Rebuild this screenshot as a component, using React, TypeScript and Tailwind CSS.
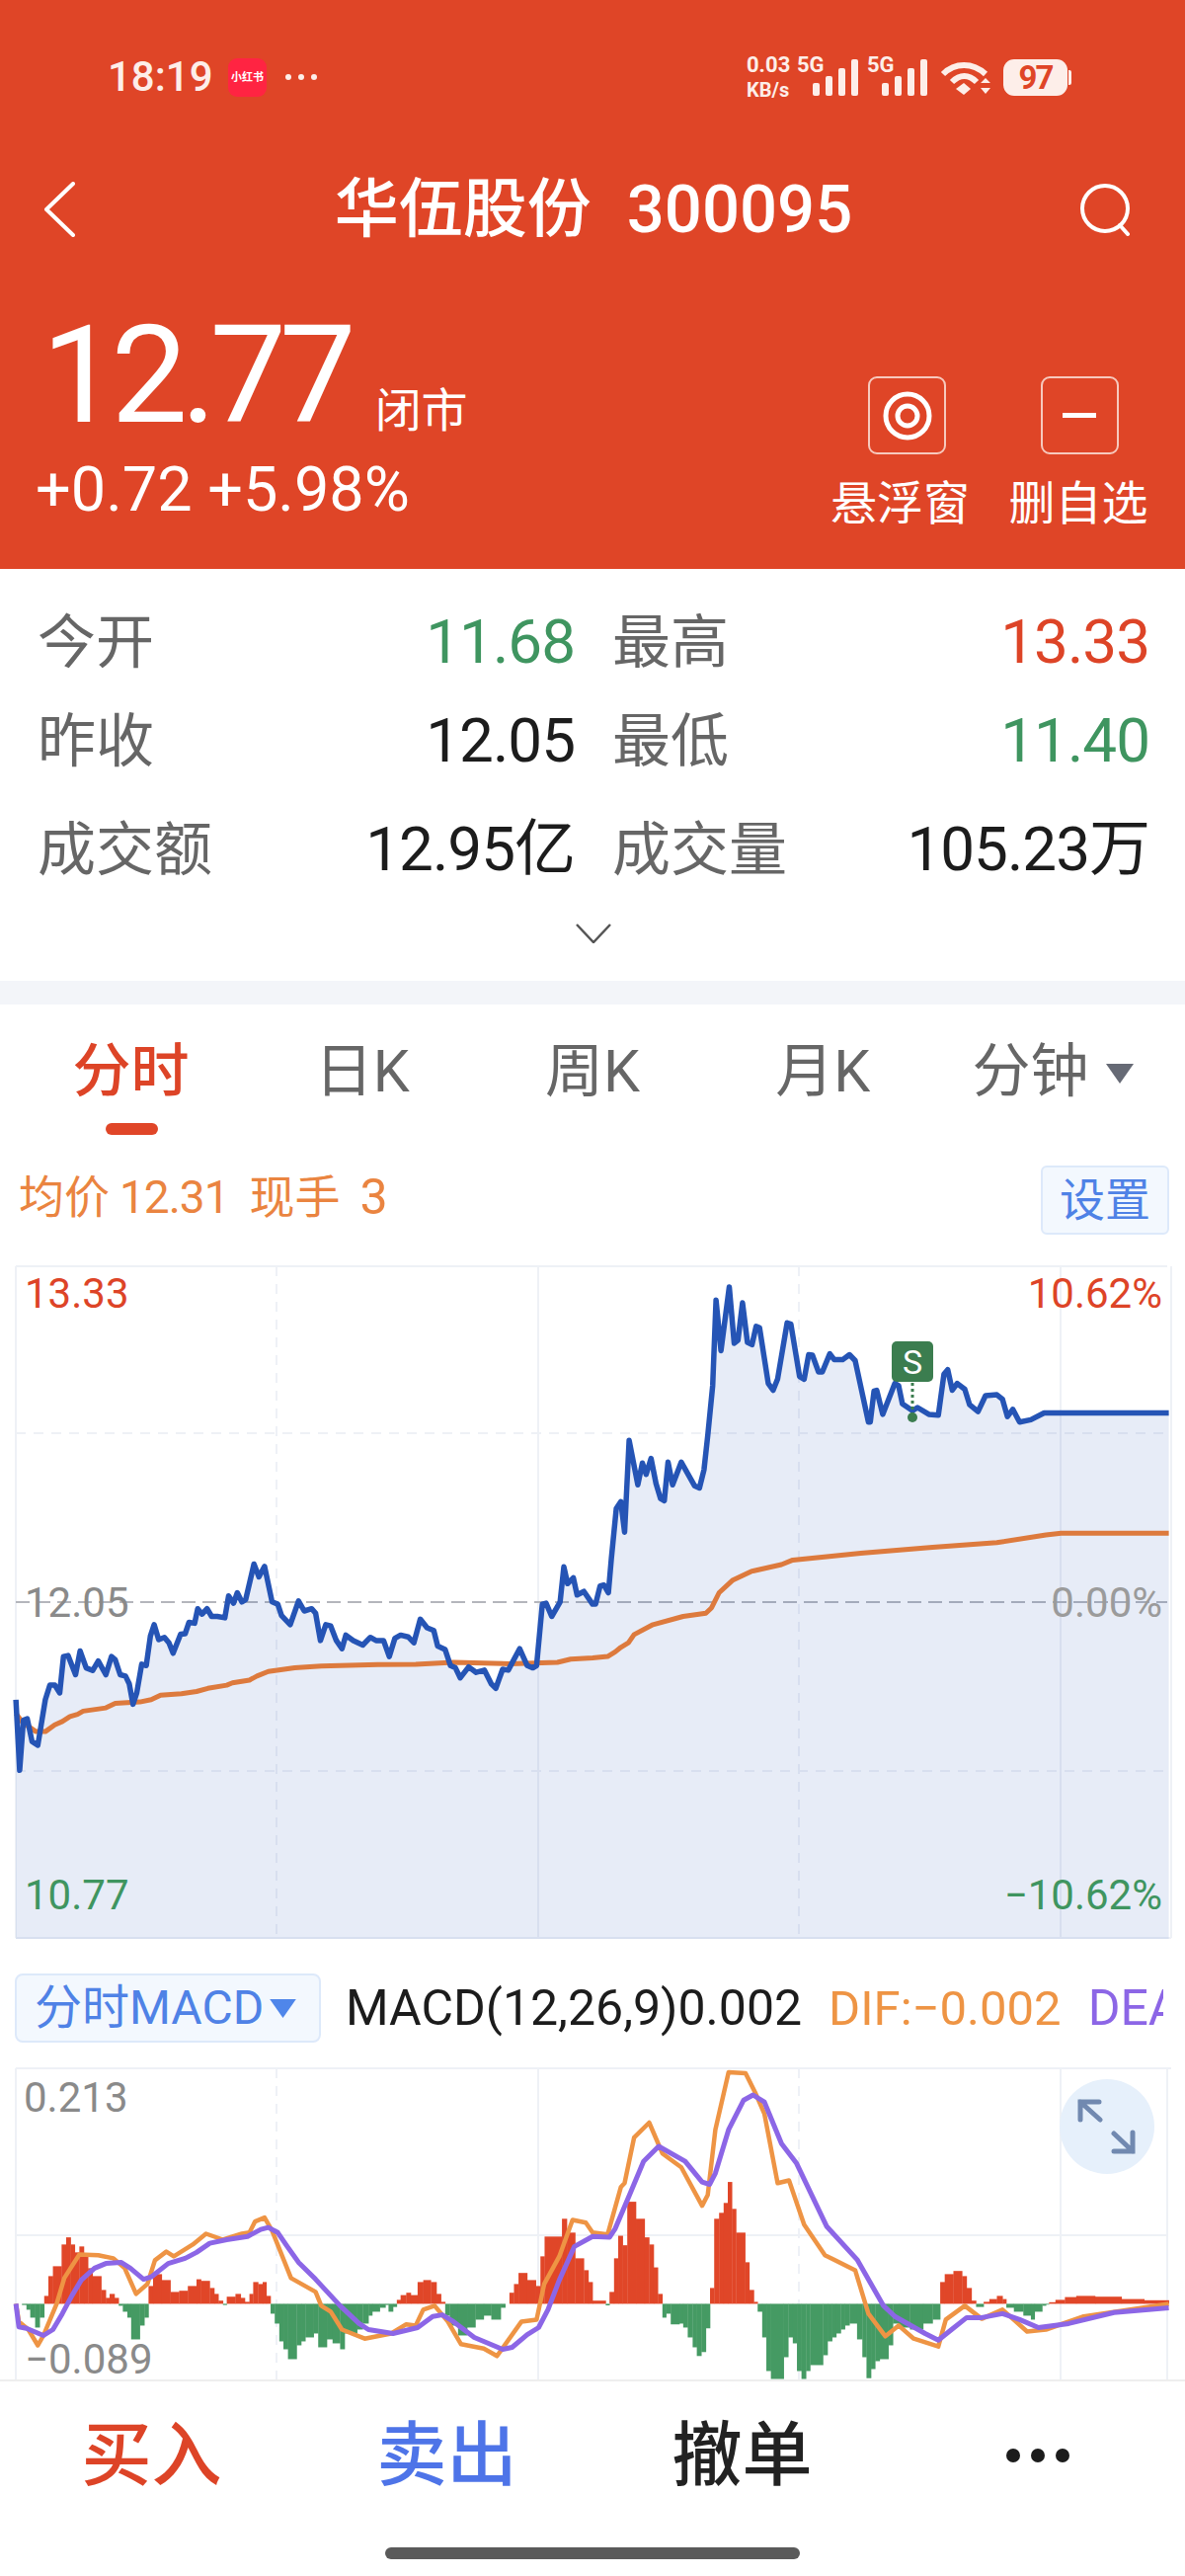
import React from "react";

type Pt = [number, number];

// Chart series are stored in the scaled coordinates of two half-width panes.
const leftX = (x: number) => x / 2.613;
const rightX = (x: number) => 600 + x / 2.613;
const priceY = (y: number) => 1260 + y / 2.17 - 1281;
const macdY = (y: number) => (1980 + y / 2.497) - 2093;

const join = (left: Pt[], right: Pt[], y: (v: number) => number) =>
  [...left.map(([a, b]) => [leftX(a), y(b)]), ...right.map(([a, b]) => [rightX(a), y(b)])]
    .map(([a, b]) => `${a.toFixed(1)},${b.toFixed(1)}`)
    .join(" ");

const priceL: Pt[] = [[42,1000],[52,1155],[62,1045],[72,1042],[85,1092],[100,1100],[120,1000],[132,968],[145,968],[158,985],[168,905],[180,903],[200,945],[212,893],[228,930],[245,936],[260,915],[280,945],[295,905],[305,912],[318,945],[332,948],[342,965],[352,1010],[362,985],[375,922],[387,925],[398,860],[408,835],[420,868],[435,863],[447,875],[458,898],[478,856],[490,855],[500,830],[515,832],[523,800],[535,812],[548,800],[560,817],[575,817],[595,820],[605,772],[618,788],[628,765],[640,785],[650,780],[672,702],[685,730],[700,707],[720,785],[735,790],[745,815],[768,835],[790,783],[805,805],[825,800],[835,810],[848,870],[862,835],[875,838],[890,870],[905,888],[915,858],[935,870],[960,880],[980,863],[995,870],[1015,870],[1030,905],[1045,865],[1060,858],[1080,862],[1095,875],[1112,823],[1130,842],[1148,848],[1158,882],[1178,890],[1192,925],[1205,930],[1218,952],[1240,928],[1260,940],[1282,935],[1300,965],[1312,975],[1330,933],[1345,935],[1375,888],[1395,925],[1410,930],[1420,925],[1435,790],[1445,788],[1460,817],[1482,785],[1492,708],[1502,745],[1517,732],[1527,770],[1545,762],[1568,790]];
const priceR: Pt[] = [[8,790],[20,750],[30,748],[42,765],[50,690],[63,580],[75,565],[85,632],[97,430],[120,528],[132,480],[142,505],[155,470],[168,525],[180,558],[190,563],[200,478],[212,528],[235,478],[270,530],[283,535],[295,495],[305,420],[318,310],[327,122],[340,233],[362,93],[375,217],[385,210],[397,128],[410,215],[422,220],[433,180],[442,183],[465,305],[478,320],[490,295],[515,172],[525,175],[548,290],[560,296],[572,242],[582,243],[598,280],[608,280],[628,240],[640,253],[662,253],[680,242],[695,255],[730,390],[735,390],[745,322],[752,320],[768,373],[800,305],[810,310],[820,350],[847,365],[860,358],[890,373],[915,375],[930,285],[940,275],[952,320],[965,305],[985,318],[998,352],[1020,367],[1040,332],[1070,330],[1085,340],[1098,378],[1112,362],[1130,390],[1160,385],[1195,370],[1525,370]];
const avgL: Pt[] = [[42,1030],[60,1050],[95,1070],[120,1070],[145,1055],[165,1048],[185,1037],[205,1032],[220,1025],[280,1018],[305,1008],[370,1005],[400,1000],[425,990],[480,987],[520,982],[550,975],[600,968],[615,963],[660,957],[680,948],[710,938],[780,930],[850,926],[1000,923],[1100,922],[1200,918],[1350,921],[1475,918],[1510,911],[1568,908]];
const avgR: Pt[] = [[40,905],[60,895],[75,885],[95,875],[110,857],[160,835],[240,817],[300,810],[315,798],[335,765],[370,738],[420,718],[500,703],[530,693],[710,678],[900,665],[1070,655],[1200,638],[1240,634],[1525,634]];

const deaL: Pt[] = [[42,880],[50,938],[70,942],[115,960],[140,945],[165,905],[190,860],[215,820],[250,790],[280,778],[320,775],[345,790],[380,818],[400,812],[445,778],[490,765],[520,750],[555,727],[600,718],[655,710],[690,692],[710,687],[735,700],[760,735],[790,775],[835,818],[900,885],[950,930],[975,945],[1040,955],[1105,940],[1145,912],[1170,908],[1200,925],[1255,965],[1330,995],[1355,990],[1395,958],[1425,940],[1450,895],[1480,820],[1520,735],[1568,710]];
const deaR: Pt[] = [[45,712],[60,690],[100,600],[135,520],[175,482],[245,520],[290,572],[310,578],[325,550],[360,440],[400,365],[425,352],[455,370],[500,475],[540,525],[620,685],[700,768],[770,885],[800,912],[880,955],[915,972],[950,945],[990,915],[1030,915],[1085,905],[1130,920],[1180,940],[1260,930],[1380,902],[1525,890]];
const difL: Pt[] = [[42,880],[50,925],[75,945],[100,985],[115,960],[150,880],[170,815],[210,755],[260,757],[300,765],[330,790],[360,855],[390,830],[410,770],[440,748],[460,760],[510,730],[545,703],[590,718],[640,703],[660,700],[675,672],[700,662],[720,695],[770,815],[835,850],[850,885],[875,900],[905,945],[965,968],[1035,955],[1075,932],[1100,935],[1120,895],[1150,885],[1185,925],[1220,982],[1280,993],[1315,1012],[1380,925],[1420,920],[1440,830],[1480,760],[1515,668],[1550,675],[1568,700]];
const difR: Pt[] = [[40,705],[75,585],[85,575],[110,460],[150,422],[185,500],[235,535],[290,632],[305,605],[325,440],[360,295],[405,297],[430,345],[455,400],[490,575],[520,568],[560,680],[615,757],[695,795],[730,905],[775,962],[810,935],[850,968],[915,988],[935,920],[985,885],[1030,918],[1085,895],[1150,950],[1200,945],[1300,912],[1525,880]];

// Histogram columns: [start, signed height]; each runs until the next start.
const histL: Pt[] = [[58,-3],[70,-15],[80,-35],[93,-60],[105,-35],[117,20],[128,70],[140,95],[163,150],[175,168],[187,150],[198,130],[210,145],[222,120],[233,90],[245,70],[268,35],[280,15],[290,25],[303,15],[314,-5],[325,-20],[337,-35],[347,-90],[370,-55],[382,-35],[393,45],[405,75],[428,60],[451,30],[474,33],[497,45],[520,62],[532,58],[555,40],[567,25],[578,8],[590,-3],[600,18],[623,25],[637,15],[648,5],[660,25],[670,55],[683,50],[695,55],[705,20],[716,-25],[727,-50],[739,-95],[750,-115],[762,-140],[785,-105],[797,-95],[808,-85],[830,-75],[842,-110],[865,-90],[880,-100],[900,-115],[912,-75],[945,-65],[960,-50],[975,-30],[985,-20],[1005,-10],[1020,-3],[1028,-20],[1040,-8],[1050,10],[1060,22],[1075,28],[1087,22],[1105,55],[1120,60],[1140,55],[1155,25],[1167,5],[1178,-30],[1190,-55],[1212,-80],[1236,-60],[1258,-40],[1280,-30],[1300,-40],[1325,-10],[1337,0],[1348,28],[1360,50],[1372,78],[1395,60],[1418,45],[1430,120],[1441,170],[1487,215],[1500,180],[1522,115],[1545,85],[1557,55],[1568,0]];
const histR: Pt[] = [[0,8],[35,-4],[45,30],[57,115],[68,172],[80,148],[92,258],[115,215],[138,168],[150,150],[162,92],[173,25],[185,-35],[195,-25],[207,-52],[230,-50],[240,-60],[252,-85],[265,-110],[276,-132],[288,-122],[300,-62],[311,40],[322,215],[335,230],[347,255],[358,308],[369,240],[380,180],[404,105],[415,35],[427,5],[437,-20],[449,-85],[460,-170],[472,-190],[506,-135],[518,-85],[530,-100],[541,-170],[553,-190],[565,-170],[576,-155],[610,-130],[622,-95],[634,-85],[645,-75],[657,-65],[668,-55],[680,-50],[700,-90],[714,-135],[725,-188],[737,-165],[748,-145],[760,-140],[783,-105],[795,-50],[810,-60],[840,-65],[875,-50],[900,-40],[920,55],[932,75],[955,83],[978,70],[990,40],[1003,8],[1015,-8],[1035,5],[1050,12],[1070,20],[1085,12],[1095,-10],[1115,-20],[1140,-30],[1160,-40],[1170,-20],[1190,-5],[1200,-2],[1208,4],[1225,10],[1250,17],[1280,20],[1330,18],[1400,12],[1460,9],[1525,0]];

const histBars = (list: Pt[], toX: (v: number) => number) =>
  list.slice(0, -1).map(([x, h], i) => {
    const x0 = toX(x);
    const x1 = toX(list[i + 1][0]);
    const base = macdY(880);
    const top = h > 0 ? macdY(880 - h) : base;
    return (
      <rect
        key={`${x}-${i}`}
        x={x0}
        y={top}
        width={x1 - x0 + 0.3}
        height={Math.abs(h) / 2.497}
        fill={h > 0 ? "#e04628" : "#459a63"}
      />
    );
  });

const priceLine = join(priceL, priceR, priceY);
const areaPoints = `${priceLine} ${rightX(1525)},682 ${leftX(42)},682`;

function Bars({ className }: { className: string }) {
  return (
    <svg viewBox="0 0 46 37" className={className} fill="#fdeee9">
      <rect x="0" y="24" width="7" height="13" rx="2" />
      <rect x="13" y="17" width="7" height="20" rx="2" />
      <rect x="26" y="9" width="7" height="28" rx="2" />
      <rect x="39" y="0" width="7" height="37" rx="2" />
    </svg>
  );
}

function StatusBar() {
  return (
    <div className="h-[156px] flex items-center justify-between pl-[109px] pr-[115px] text-[#fdeee9]">
      <div className="flex items-center">
        <span className="text-[42px] font-medium leading-none w-[122px]">18:19</span>
        <span className="w-[39px] h-[39px] rounded-[9px] bg-[#ff2442] flex items-center justify-center text-[11px] font-bold text-white leading-none whitespace-nowrap">
          小红书
        </span>
        <span className="ml-[19px] flex gap-[7px]">
          <i className="block w-[6px] h-[6px] rounded-full bg-[#fdeee9]" />
          <i className="block w-[6px] h-[6px] rounded-full bg-[#fdeee9]" />
          <i className="block w-[6px] h-[6px] rounded-full bg-[#fdeee9]" />
        </span>
      </div>
      <div className="flex items-center h-[40px]">
        <div className="w-[51px] flex flex-col font-bold whitespace-nowrap">
          <span className="text-[22px] leading-[26px]">0.03</span>
          <span className="text-[20px] leading-[24px]">KB/s</span>
        </div>
        <div className="relative w-[63px] h-[38px]">
          <span className="absolute left-0 top-[-6px] text-[22px] font-bold leading-[26px]">5G</span>
          <Bars className="absolute left-[16px] top-[1px] w-[46px] h-[37px]" />
        </div>
        <div className="relative w-[61px] h-[38px] ml-[8px]">
          <span className="absolute left-0 top-[-6px] text-[22px] font-bold leading-[26px]">5G</span>
          <Bars className="absolute left-[15px] top-[1px] w-[46px] h-[37px]" />
        </div>
        <svg viewBox="0 0 52 36" className="w-[52px] h-[36px] ml-[13px]" fill="none" stroke="#fdeee9" strokeWidth="6">
          <path d="M3 15C15 3 33 3 46 15" />
          <path d="M12 23C20 15 29 15 37 23" />
          <path d="M16 30L24 24L31 30L24 36Z" fill="#fdeee9" stroke="none" />
          <path d="M41 24l5-5l5 5zM41 29h10l-5 6z" fill="#fdeee9" stroke="none" />
        </svg>
        <div className="ml-[12px] flex items-center">
          <div className="w-[65px] h-[37px] rounded-[11px] bg-[#fdeee9] flex items-center justify-center text-[#df4527] text-[33px] font-bold leading-none tracking-[-2px]">
            97
          </div>
          <div className="w-[3px] h-[15px] rounded-r-[2px] bg-[#fdeee9] ml-[1px]" />
        </div>
      </div>
    </div>
  );
}

function NavRow() {
  return (
    <div className="h-[112px] flex items-center justify-between pl-[44px] pr-[52px]">
      <svg viewBox="0 0 32 56" className="w-[32px] h-[56px]" fill="none" stroke="white" strokeWidth="4" strokeLinecap="round" strokeLinejoin="round">
        <path d="M30 2L3 28L30 54" />
      </svg>
      <div className="text-white leading-none font-medium whitespace-nowrap flex items-center ml-[34px]">
        <span className="text-[65px]">华伍股份</span>
        <span className="text-[67px] ml-[36px]">300095</span>
      </div>
      <svg viewBox="0 0 56 54" className="w-[56px] h-[54px]" fill="none" stroke="white" strokeWidth="4" strokeLinecap="round">
        <circle cx="27" cy="26" r="23" />
        <path d="M42 43L50 52" />
      </svg>
    </div>
  );
}

function QuoteRow() {
  return (
    <div className="flex justify-between pl-[38px] pr-[37px]">
      <div>
        <div className="flex items-end mt-[42px] h-[140px]">
          <span className="text-[138px] leading-[140px] text-white tracking-[-7px] ml-[4px]">12.77</span>
          <span className="text-[47px] leading-none text-white ml-[26px] mb-[11px]">闭市</span>
        </div>
        <div className="text-[63px] leading-[70px] text-white mt-[11px] ml-[-2px] whitespace-pre">+0.72 +5.98%</div>
      </div>
      <div className="flex gap-[39px] mt-[113px]">
        <div className="w-[141px] flex flex-col items-center">
          <div className="w-[79px] h-[79px] rounded-[9px] border-2 border-[#f7c9bd] flex items-center justify-center ml-[14px]">
            <svg viewBox="0 0 52 52" className="w-[52px] h-[52px]" fill="none" stroke="white">
              <circle cx="26" cy="26" r="22" strokeWidth="5" />
              <circle cx="26" cy="26" r="10" strokeWidth="5" />
            </svg>
          </div>
          <span className="text-[47px] leading-none text-white mt-[26px] whitespace-nowrap">悬浮窗</span>
        </div>
        <div className="w-[142px] flex flex-col items-center">
          <div className="w-[79px] h-[79px] rounded-[9px] border-2 border-[#f7c9bd] flex items-center justify-center ml-[2px]">
            <span className="block w-[34px] h-[5px] bg-white" />
          </div>
          <span className="text-[47px] leading-none text-white mt-[26px] whitespace-nowrap">删自选</span>
        </div>
      </div>
    </div>
  );
}

function Stat({ label, value, tone }: { label: string; value: string; tone: string }) {
  return (
    <div className="flex items-center justify-between">
      <span className="text-[59px] leading-none text-[#666666] whitespace-nowrap">{label}</span>
      <span className={`text-[62px] leading-none tracking-[-1px] whitespace-nowrap ${tone}`}>{value}</span>
    </div>
  );
}

function Stats() {
  const red = "text-[#dd4427]";
  const green = "text-[#3f9560]";
  const dark = "text-[#1c1c1c]";
  return (
    <div className="h-[417px] pl-[38px] pr-[36px] pt-[43px] flex flex-col">
      <div className="grid grid-cols-[544px_544px] gap-x-[38px] h-[60px] items-center">
        <Stat label="今开" value="11.68" tone={green} />
        <Stat label="最高" value="13.33" tone={red} />
      </div>
      <div className="grid grid-cols-[544px_544px] gap-x-[38px] h-[60px] items-center mt-[40px]">
        <Stat label="昨收" value="12.05" tone={dark} />
        <Stat label="最低" value="11.40" tone={green} />
      </div>
      <div className="grid grid-cols-[544px_544px] gap-x-[38px] h-[60px] items-center mt-[50px]">
        <Stat label="成交额" value="12.95亿" tone={dark} />
        <Stat label="成交量" value="105.23万" tone={dark} />
      </div>
      <div className="flex justify-center mt-[46px]">
        <svg viewBox="0 0 36 20" className="w-[36px] h-[20px]" fill="none" stroke="#555555" strokeWidth="2.5">
          <path d="M1 1L18 19L35 1" />
        </svg>
      </div>
    </div>
  );
}

function Tabs() {
  const tab = "text-[59px] leading-none text-[#666666] text-center whitespace-nowrap";
  return (
    <div className="h-[140px] px-[17px] grid grid-cols-5 pt-[38px]">
      <div className="flex flex-col items-center">
        <span className="text-[59px] leading-none font-medium text-[#dd4427] ml-[-2px]">分时</span>
        <span className="block w-[53px] h-[12px] rounded-full bg-[#e04628] mt-[23px]" />
      </div>
      <div className={tab}>日K</div>
      <div className={tab}>周K</div>
      <div className={tab}>月K</div>
      <div className={`${tab} flex items-start justify-center gap-[18px]`}>
        <span>分钟</span>
        <svg viewBox="0 0 28 20" className="w-[28px] h-[20px] mt-[22px]" fill="#666a75">
          <path d="M0 0H28L14 20Z" />
        </svg>
      </div>
    </div>
  );
}

function TickerRow() {
  return (
    <div className="h-[88px] flex items-start justify-between pl-[19px] pr-[16px] pt-[23px]">
      <div className="flex items-center text-[46px] leading-[46px] text-[#ea8440] whitespace-nowrap mt-[9px]">
        <span>均价</span>
        <span className="ml-[10px] tracking-[-1px]">12.31</span>
        <span className="ml-[21px]">现手</span>
        <span className="ml-[20px] text-[50px] leading-[46px]">3</span>
      </div>
      <div className="w-[130px] h-[70px] rounded-[6px] bg-[#f3f8fe] border-2 border-[#dde9fa] flex items-center justify-center text-[46px] leading-none text-[#4f82e6]">
        设置
      </div>
    </div>
  );
}

function PriceChart() {
  const label = "absolute text-[42px] leading-none";
  return (
    <div className="relative h-[682px]">
      <svg viewBox="0 0 1200 682" className="absolute inset-0 w-[1200px] h-[682px]" fill="none">
        <path d="M16 1H1182M16 1V681M16 681H1186M1186 1V681" stroke="#eef1f6" strokeWidth="2" />
        <path d="M16 170H1182M16 512H1182M280 1V681M809 1V681" stroke="#eef1f6" strokeWidth="2" strokeDasharray="10 8" />
        <path d="M545 1V681M1074 1V681" stroke="#eef1f6" strokeWidth="2" />
        <path d="M16 341H1182" stroke="#b4b6bc" strokeWidth="2" strokeDasharray="14 7" />
        <polygon points={areaPoints} fill="#2858b5" fillOpacity="0.113" />
        <polyline points={join(avgL, avgR, priceY)} stroke="#dd7a3d" strokeWidth="5" strokeLinejoin="round" />
        <polyline points={priceLine} stroke="#2554b5" strokeWidth="5.5" strokeLinejoin="round" />
        <path d="M924 119V152" stroke="#3b7d4f" strokeWidth="3" strokeDasharray="3 3" />
        <circle cx="924" cy="154" r="5" fill="#3b7d4f" />
      </svg>
      <div className={`${label} left-[25px] top-[8px] text-[#dd4427]`}>13.33</div>
      <div className={`${label} left-[25px] top-[321px] text-[#8a8a8a]`}>12.05</div>
      <div className={`${label} left-[25px] top-[617px] text-[#3f9560]`}>10.77</div>
      <div className={`${label} right-[23px] top-[8px] text-[#dd4427]`}>10.62%</div>
      <div className={`${label} right-[23px] top-[321px] text-[#9b9b9b]`}>0.00%</div>
      <div className={`${label} right-[23px] top-[617px] text-[#3f9560]`}>−10.62%</div>
      <div className="absolute left-[903px] top-[77px] w-[42px] h-[41px] rounded-[5px] bg-[#3b7d4f] flex items-center justify-center text-[34px] leading-none text-white">
        S
      </div>
    </div>
  );
}

function MacdHeader() {
  return (
    <div className="h-[130px] flex items-start pl-[15px] pt-[35px]">
      <div className="w-[310px] h-[70px] shrink-0 rounded-[8px] bg-[#f3f8fe] border-2 border-[#dde9fa] flex items-center pl-[18px] text-[48px] leading-none text-[#4f82e6]">
        <span className="whitespace-nowrap">分时MACD</span>
        <svg viewBox="0 0 28 20" className="w-[27px] h-[19px] ml-[6px] shrink-0" fill="#4f86ea">
          <path d="M0 0H28L14 20Z" />
        </svg>
      </div>
      <div className="w-[828px] ml-[25px] h-[70px] overflow-hidden flex items-center whitespace-pre text-[50px] leading-none">
        <span className="text-[#1c1c1c]">MACD(12,26,9)0.002</span>
        <span className="text-[#ee9444] ml-[27px] text-[49px]">DIF:−0.002</span>
        <span className="text-[#8c66e6] ml-[27px]">DEA</span>
      </div>
    </div>
  );
}

function MacdChart() {
  return (
    <div className="relative h-[316px]">
      <svg viewBox="0 0 1200 316" className="absolute inset-0 w-[1200px] h-[316px]" fill="none">
        <path d="M16 1H1186M16 1V316M1182 1V316M545 1V316M1074 1V316M16 170H1182" stroke="#eef1f6" strokeWidth="2" />
        <path d="M280 1V316M809 1V316" stroke="#eef1f6" strokeWidth="2" strokeDasharray="10 8" />
        {histBars(histL, leftX)}
        {histBars(histR, rightX)}
        <polyline points={join(difL, difR, macdY)} stroke="#ee9444" strokeWidth="4.5" strokeLinejoin="round" />
        <polyline points={join(deaL, deaR, macdY)} stroke="#8c66e6" strokeWidth="5" strokeLinejoin="round" />
      </svg>
      <div className="absolute left-[24px] top-[10px] text-[42px] leading-none text-[#8a8a8a]">0.213</div>
      <div className="absolute left-[25px] top-[275px] text-[42px] leading-none text-[#8a8a8a]">−0.089</div>
      <div className="absolute left-[1073px] top-[12px] w-[96px] h-[96px] rounded-full bg-[#e6f0fb] flex items-center justify-center">
        <svg viewBox="0 0 60 56" className="w-[60px] h-[56px]" fill="none" stroke="#7189b0" strokeWidth="5" strokeLinecap="round">
          <path d="M3 21V3H22M3 3L23 21" />
          <path d="M37 35L56 53M56 34V53H37" />
        </svg>
      </div>
    </div>
  );
}

function ActionBar() {
  const action = "text-center text-[71px] leading-none font-medium";
  return (
    <div className="relative flex-1 border-t-2 border-[#eeeeee]">
      <div className="grid grid-cols-4 pl-[4px] pt-[39px] items-center">
        <div className={`${action} text-[#dd4427]`}>买入</div>
        <div className={`${action} text-[#4e74e8]`}>卖出</div>
        <div className={`${action} text-[#222222]`}>撤单</div>
        <div className="flex justify-center gap-[11px]">
          <i className="block w-[14px] h-[14px] rounded-full bg-[#1c1c1c]" />
          <i className="block w-[14px] h-[14px] rounded-full bg-[#1c1c1c]" />
          <i className="block w-[14px] h-[14px] rounded-full bg-[#1c1c1c]" />
        </div>
      </div>
      <div className="absolute left-[390px] top-[168px] w-[420px] h-[12px] rounded-full bg-[#5a5a5a]" />
    </div>
  );
}

export default function App() {
  return (
    <div className="w-[1200px] h-[2608px] overflow-hidden bg-white flex flex-col font-[Roboto,'Noto_Sans_CJK_SC',sans-serif]">
      <header className="h-[576px] shrink-0 bg-[#df4527]">
        <StatusBar />
        <NavRow />
        <QuoteRow />
      </header>
      <Stats />
      <div className="h-[24px] shrink-0 bg-[#f3f5f9]" />
      <Tabs />
      <TickerRow />
      <div className="h-[36px] shrink-0" />
      <PriceChart />
      <MacdHeader />
      <MacdChart />
      <ActionBar />
    </div>
  );
}
